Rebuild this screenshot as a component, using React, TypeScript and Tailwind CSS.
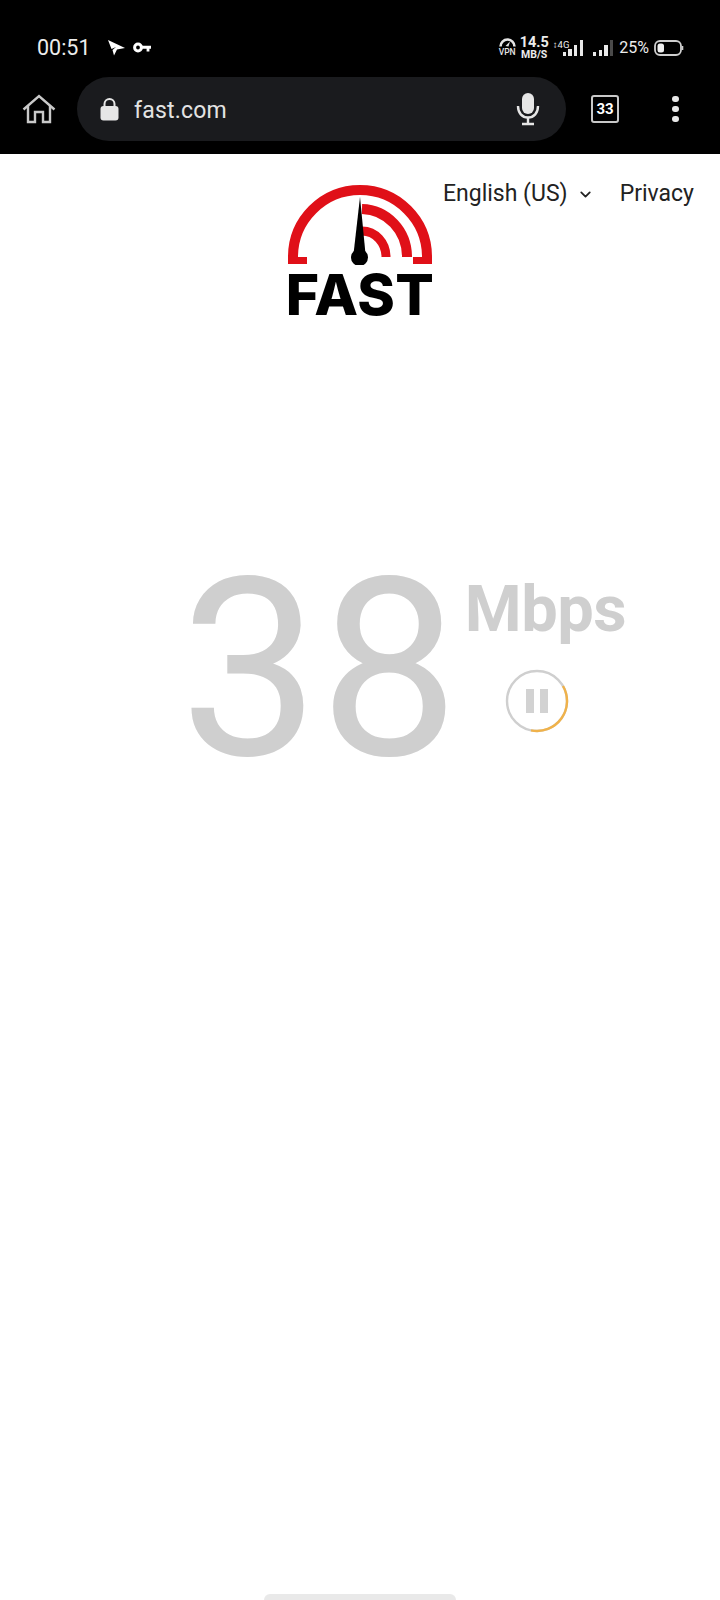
import { ChevronDown } from "lucide-react";

const Roboto = "font-['Roboto',sans-serif]";

function NavArrow() {
  return (
    <svg width="18" height="16" viewBox="0 0 18 16" className="text-white">
      <path d="M1 0 L18 8 L10 9.500 L7 15.500 L5.500 10 L9 7 L4.500 9 Z" fill="currentColor" />
    </svg>
  );
}

function KeyIcon() {
  return (
    <svg width="18" height="11" viewBox="0 0 18 11" fill="none">
      <circle cx="5" cy="5.500" r="3.400" stroke="white" strokeWidth="3" />
      <path d="M8 3.800 H18 V6.800 H16.400 V9.400 H13.600 V6.800 H8 Z" fill="white" />
    </svg>
  );
}

function VpnGauge() {
  return (
    <div className="flex w-[17px] flex-col items-center">
      <svg width="17" height="9" viewBox="0 0 17 9" fill="none">
        <path d="M1.500 8.500 A7 7 0 0 1 15.500 8.500" stroke="#e5e5e5" strokeWidth="2.600" />
        <path d="M6.500 8 L11 3.500 L9.500 8.500 Z" fill="#e5e5e5" />
      </svg>
      <span className="mt-[1px] text-[8.5px] leading-[9px] font-medium text-[#e5e5e5]">VPN</span>
    </div>
  );
}

function Signal({ levels, dim }: { levels: number[]; dim?: boolean }) {
  return (
    <div className="flex h-[16px] items-end gap-[2.5px]">
      {levels.map((h, i) => (
        <div
          key={i}
          style={{ height: h }}
          className={`w-[3.2px] ${dim && i === levels.length - 1 ? "bg-[#4a4a4a]" : "bg-[#e8e8e8]"}`}
        />
      ))}
    </div>
  );
}

function StatusBar() {
  return (
    <div className={`flex h-[77px] items-center pt-[18px] pr-[36px] pl-[37px] ${Roboto} text-[#ececec]`}>
      <span className="text-[21.5px] leading-none">00:51</span>
      <div className="ml-[16px] flex items-center gap-[8px]">
        <NavArrow />
        <KeyIcon />
      </div>
      <div className="ml-auto flex items-center">
        <VpnGauge />
        <div className="ml-[4px] flex flex-col items-center font-bold">
          <span className="text-[14.5px] leading-[13px]">14.5</span>
          <span className="text-[10.5px] leading-[11px]">MB/S</span>
        </div>
        <div className="relative ml-[5px] flex h-[16px] items-end">
          <span className="absolute top-[0px] -left-[1px] text-[9.5px] leading-[10px] whitespace-nowrap">↕4G</span>
          <div className="ml-[9px]">
            <Signal levels={[4, 7, 11, 16]} />
          </div>
        </div>
        <div className="ml-[10px]">
          <Signal levels={[4, 6, 11, 16]} dim />
        </div>
        <span className="ml-[6px] text-[16px] leading-none">25%</span>
        <svg width="30" height="16" viewBox="0 0 30 16" fill="none" className="ml-[5px]">
          <rect x="1" y="1" width="26" height="14" rx="5" stroke="#cfcfcf" strokeWidth="1.800" />
          <rect x="3.500" y="3.500" width="6.500" height="9" rx="2.500" fill="#f0f0f0" />
          <path d="M28.500 6 V10" stroke="#cfcfcf" strokeWidth="1.600" />
        </svg>
      </div>
    </div>
  );
}

function Omnibox() {
  return (
    <div className="flex h-[77px] items-start text-[#e3e3e3]">
      <div className="flex h-[64px] w-[77px] items-center justify-center">
        <svg width="34" height="30" viewBox="0 0 34 30" fill="none" stroke="#c9c9c9" strokeWidth="2.400">
          <path d="M1.500 15.500 L17 2 L32.500 15.500" />
          <path d="M6 12 V28 H13 V18 H21 V28 H28 V12" />
        </svg>
      </div>
      <div className={`flex h-[64px] w-[489px] items-center rounded-full bg-[#1a1b1e] pr-[26px] pl-[23px] ${Roboto}`}>
        <svg width="19" height="23" viewBox="0 0 19 23" fill="#e6e6e6">
          <path d="M4.500 9 V6 A5 5 0 0 1 14.500 6 V9" fill="none" stroke="#e6e6e6" strokeWidth="2" />
          <rect x="0.500" y="8" width="18" height="14.500" rx="3" />
        </svg>
        <span className="mt-[3px] ml-[15px] text-[23px] leading-none tracking-[0.2px]">fast.com</span>
        <svg width="24" height="34" viewBox="0 0 24 34" fill="none" className="ml-auto">
          <rect x="6" y="1" width="12" height="21" rx="6" fill="#e6e6e6" />
          <path d="M2 14 C2 21 6 25.500 12 25.500 C18 25.500 22 21 22 14" stroke="#e6e6e6" strokeWidth="2.400" />
          <path d="M12 25 V31 M6 32 H18" stroke="#e6e6e6" strokeWidth="2.400" />
        </svg>
      </div>
      <div className="ml-[25px] flex h-[64px] w-[28px] items-center justify-center">
        <div className={`flex h-[28px] w-[28px] items-center justify-center rounded-[3px] border-2 border-[#c8c8c8] text-[15px] leading-none font-bold text-white ${Roboto}`}>
          33
        </div>
      </div>
      <div className="ml-[53px] flex h-[64px] flex-col items-center justify-center gap-[3.5px]">
        <div className="h-[6.5px] w-[6.5px] rounded-full bg-[#e8e8e8]" />
        <div className="h-[6.5px] w-[6.5px] rounded-full bg-[#e8e8e8]" />
        <div className="h-[6.5px] w-[6.5px] rounded-full bg-[#e8e8e8]" />
      </div>
    </div>
  );
}

function FastLogo() {
  return (
    <div className="flex w-[146px] flex-col items-center">
      <svg width="146" height="80" viewBox="18 15 144 80" fill="none">
        <path d="M23 87 A67 67 0 0 1 157 87" stroke="#e01018" strokeWidth="10" />
        <path d="M18 87 H37 V94 H18 Z M143 87 H162 V94 H143 Z" fill="#e01018" />
        <path d="M92 39 A46 48 0 0 1 137 87" stroke="#e01018" strokeWidth="10" />
        <path d="M92 61 A24 26 0 0 1 116 87" stroke="#e01018" strokeWidth="9" />
        <path d="M90 27 L95.500 84 H83.500 Z" fill="#000" />
        <circle cx="89.500" cy="87.500" r="8.500" fill="#000" />
      </svg>
      <span className="mt-[9px] font-['Inter',sans-serif] text-[57px] leading-[42px] font-extrabold tracking-[0.4px] whitespace-nowrap text-black">
        FAST
      </span>
    </div>
  );
}

function SpeedReadout() {
  return (
    <div className={`mt-[235px] flex pl-[180px] text-[#cfcfcf] ${Roboto}`}>
      <span className="text-[248px] leading-[240px] font-normal">38</span>
      <div className="ml-[6px] flex flex-col items-start">
        <span className="mt-[22px] text-[65px] leading-[72px] font-bold tracking-[-0.5px]">Mbps</span>
        <div className="mt-[24px] ml-[40px]">
          <svg width="64" height="64" viewBox="0 0 64 64" fill="none">
            <circle cx="32" cy="32" r="30" stroke="#cfcfcf" strokeWidth="2.400" />
            <path d="M58 17 A30 30 0 0 1 26 61.400" stroke="#f0b24a" strokeWidth="2.400" />
            <rect x="21" y="20" width="8" height="24" fill="#d2d2d2" />
            <rect x="35" y="20" width="8" height="24" fill="#d2d2d2" />
          </svg>
        </div>
      </div>
    </div>
  );
}

export default function App() {
  return (
    <div className="flex h-[1600px] w-[720px] flex-col overflow-hidden bg-white">
      <div className="bg-black">
        <StatusBar />
        <Omnibox />
      </div>

      <div className="mt-[31px] grid grid-cols-[1fr_146px_1fr] items-start">
        <div />
        <FastLogo />
        <div className={`-mt-[6px] flex items-center pr-[26px] pl-[10px] text-[23px] leading-[30px] text-[#222] ${Roboto}`}>
          <span className="whitespace-nowrap">English (US)</span>
          <ChevronDown size={17} strokeWidth={2.500} className="ml-[9px]" />
          <span className="ml-auto">Privacy</span>
        </div>
      </div>

      <SpeedReadout />

      <div className="mx-auto mt-auto h-[6px] w-[192px] rounded-t-full bg-[#e9e9e9]" />
    </div>
  );
}
